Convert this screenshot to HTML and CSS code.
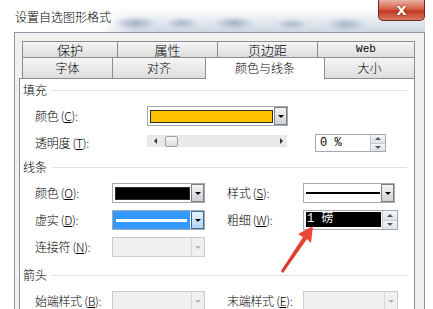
FILE: index.html
```html
<!DOCTYPE html>
<html lang="zh-CN">
<head>
  <meta charset="UTF-8" />
  <meta name="viewport" content="width=device-width, initial-scale=1.0" />
  <title>设置自选图形格式</title>
  <link rel="stylesheet" href="styles.css">
</head>
<body>
  <div class="window">
    <div class="titlebar">
      <span class="title">设置自选图形格式</span>
      <span class="close">X</span>
    </div>

    <div class="dialog">
      <div class="tabs tabs-back">
        <div class="tab t-96">保护</div>
        <div class="tab t-100">属性</div>
        <div class="tab t-100">页边距</div>
        <div class="tab t-97 tab-web">Web</div>
      </div>
      <div class="tabs tabs-front">
        <div class="tab t-91">字体</div>
        <div class="tab t-93">对齐</div>
        <div class="tab t-119 active">颜色与线条</div>
        <div class="tab t-90">大小</div>
      </div>

      <div class="panel">
        <div class="group">
          <div class="group-head"><span>填充</span></div>
          <div class="rows">
            <div class="row">
              <span class="lbl lbl-wide">颜色 (<u>C</u>):</span>
              <div class="combo combo-fill">
                <span class="swatch swatch-yellow"></span>
                <span class="drop"></span>
              </div>
            </div>
            <div class="row">
              <span class="lbl lbl-wide">透明度 (<u>T</u>):</span>
              <div class="slider">
                <span class="arrow-left"></span>
                <span class="thumb"></span>
                <span class="arrow-right"></span>
              </div>
              <div class="spin spin-pct">
                <span class="spin-text">0 %</span>
                <span class="spin-btns"><span class="up"></span><span class="down"></span></span>
              </div>
            </div>
          </div>
        </div>

        <div class="group group-line">
          <div class="group-head"><span>线条</span></div>
          <div class="rows">
            <div class="row">
              <span class="lbl lbl-md">颜色 (<u>O</u>):</span>
              <div class="combo combo-md">
                <span class="swatch swatch-black"></span>
                <span class="drop"></span>
              </div>
              <span class="lbl lbl-right">样式 (<u>S</u>):</span>
              <div class="combo combo-rt">
                <span class="line-sample"></span>
                <span class="drop"></span>
              </div>
            </div>
            <div class="row">
              <span class="lbl lbl-md">虚实 (<u>D</u>):</span>
              <div class="combo combo-md">
                <span class="dash-sel"></span>
                <span class="drop drop-hot"></span>
              </div>
              <span class="lbl lbl-right">粗细 (<u>W</u>):</span>
              <div class="spin spin-weight">
                <span class="spin-text sel-text">1 磅</span>
                <span class="spin-btns"><span class="up"></span><span class="down"></span></span>
              </div>
            </div>
            <div class="row">
              <span class="lbl lbl-md">连接符 (<u>N</u>):</span>
              <div class="combo combo-md disabled">
                <span class="blank"></span>
                <span class="drop"></span>
              </div>
            </div>
          </div>
        </div>

        <div class="group group-arrow">
          <div class="group-head"><span>箭头</span></div>
          <div class="rows">
            <div class="row">
              <span class="lbl lbl-md">始端样式 (<u>B</u>):</span>
              <div class="combo combo-md disabled">
                <span class="blank"></span>
                <span class="drop"></span>
              </div>
              <span class="lbl lbl-right">末端样式 (<u>E</u>):</span>
              <div class="combo combo-end disabled">
                <span class="blank"></span>
                <span class="drop"></span>
              </div>
            </div>
          </div>
        </div>
      </div>
    </div>
  </div>

  <!-- red annotation arrow pointing at the weight box -->
  <svg class="annot" width="433" height="309" viewBox="0 0 433 309">
    <defs>
      <linearGradient id="red" x1="0" y1="1" x2="1" y2="0">
        <stop offset="0" stop-color="#d8322a"/>
        <stop offset="1" stop-color="#f04a3c"/>
      </linearGradient>
    </defs>
    <polygon points="313,226 298,234 303,237 281,271 283,273 307,239 311,243" fill="url(#red)"/>
  </svg>
</body>
</html>
```

FILE: styles.css
```css
body {
  margin: 0;
  width: 433px;
  height: 309px;
  overflow: hidden;
  background: #fff;
  position: relative;
  font-family: "Noto Sans CJK SC", "Liberation Sans", sans-serif;
  font-weight: 300;
  font-size: 12px;
  color: #000;
}
.window {
  margin-left: 14px;
  width: 411px;
}
.titlebar {
  height: 32px;
  display: flex;
  justify-content: space-between;
  align-items: flex-start;
  background:
    radial-gradient(22px 7px at 121px 23px, rgba(90,115,145,.45), transparent),
    radial-gradient(16px 6px at 168px 23px, rgba(90,115,145,.4), transparent),
    radial-gradient(20px 7px at 220px 23px, rgba(90,115,145,.45), transparent),
    radial-gradient(16px 6px at 278px 24px, rgba(90,115,145,.35), transparent),
    radial-gradient(20px 7px at 332px 24px, rgba(90,115,145,.4), transparent),
    linear-gradient(to right, #fff 0, #fff 85px, rgba(255,255,255,0) 120px),
    linear-gradient(to bottom, rgba(255,255,255,0) 25%, rgba(196,208,222,.85) 100%),
    #fff;
}
.title {
  margin: 9px 0 0 1px;
  line-height: 16px;
  font-size: 12px;
}
.close {
  width: 47px;
  height: 21px;
  box-sizing: border-box;
  border: 1px solid #6e2b22;
  border-top: none;
  border-radius: 0 0 5px 5px;
  background: linear-gradient(#eab2a6 0%, #d9604a 45%, #c2381f 55%, #d67a62 100%);
  color: #fff;
  font-family: "DejaVu Sans", sans-serif;
  font-weight: bold;
  font-size: 13px;
  line-height: 21px;
  text-align: center;
  text-shadow: 0 0 2px #5a1a10;
}
.dialog {
  border: 1px solid #8a97a7;
  border-bottom: none;
  background: #f0f0f0;
  height: 277px;
  overflow: hidden;
  padding: 8px 9px 0 4px;
  box-sizing: border-box;
}
.tabs {
  display: flex;
  margin-left: 3px;
}
.tab {
  box-sizing: border-box;
  border: 1px solid #8b8d92;
  border-left: none;
  background: linear-gradient(#f5f5f5, #dedede);
  text-align: center;
  flex: none;
}
.tab:first-child {
  border-left: 1px solid #8b8d92;
}
.tabs-back .tab {
  height: 17px;
  line-height: 15px;
  font-size: 13px;
}
.tab-web {
  font-family: "Liberation Mono", monospace;
  font-weight: normal;
  font-size: 11px !important;
}
.tabs-front {
  height: 21px;
  margin-bottom: -1px;
  align-items: flex-end;
}
.tabs-front .tab {
  height: 21px;
  border-top: none;
  line-height: 19px;
  font-size: 12px;
}
.tabs-front .tab.active {
  height: 22px;
  border-top: 1px solid #8b8d92;
  border-bottom: none;
  background: #fff;
  position: relative;
  z-index: 1;
}
.t-96 { width: 96px; }
.t-100 { width: 100px; }
.t-97 { width: 97px; }
.t-91 { width: 91px; }
.t-93 { width: 93px; }
.t-119 { width: 119px; }
.t-90 { width: 90px; }

.panel {
  border: 1px solid #8b8d92;
  border-bottom: none;
  background: #fff;
  height: 240px;
  padding: 3px 7px 0 3px;
}
.group-line { margin-top: 6px; }
.group-arrow { margin-top: 10px; }
.group-head {
  display: flex;
  align-items: center;
  gap: 5px;
  height: 16px;
  line-height: 16px;
  margin-bottom: 8px;
}
.group-head::after {
  content: "";
  flex: 1;
  height: 1px;
  background: #dcdfe3;
}
.rows {
  display: flex;
  flex-direction: column;
  gap: 7px;
  padding-left: 12px;
}
.row {
  display: flex;
  align-items: center;
  height: 20px;
}
.lbl {
  flex: none;
  line-height: 20px;
  white-space: nowrap;
  letter-spacing: -0.3px;
}
.lbl-wide { width: 112px; }
.lbl-md { width: 77px; }
.lbl-right { width: 76px; margin-left: 22px; }

.combo {
  display: flex;
  box-sizing: border-box;
  height: 20px;
  border: 1px solid #a5a9b0;
  background: #fff;
  flex: none;
}
.combo-fill { width: 141px; }
.combo-md { width: 93px; }
.combo-rt { width: 92px; }
.combo-end { width: 95px; }
.swatch {
  flex: 1;
  margin: 3px 1px 2px 2px;
  border: 1px solid #2a2a2a;
}
.swatch-yellow { background: #ffc000; }
.swatch-black { background: #000; }
.drop {
  width: 13px;
  flex: none;
  box-sizing: border-box;
  border: 1px solid #7b7f86;
  background: linear-gradient(#f4f4f4, #cfd1d4);
  display: flex;
  align-items: center;
  justify-content: center;
}
.drop::after {
  content: "";
  border-left: 3px solid transparent;
  border-right: 3px solid transparent;
  border-top: 3px solid #000;
}
.drop-hot {
  border-color: #3b6f9c;
  background: linear-gradient(#e6f2fc, #aed4f2);
}
.dash-sel {
  flex: 1;
  margin: 0 1px 0 0;
  background: #3399ff;
  display: flex;
  align-items: center;
}
.dash-sel::after {
  content: "";
  flex: 1;
  height: 3px;
  margin: 0 3px;
  background: #fff;
}
.line-sample {
  flex: 1;
  display: flex;
  align-items: center;
  margin: 0 1px 0 2px;
}
.line-sample::after {
  content: "";
  flex: 1;
  height: 2px;
  background: #000;
}
.combo.disabled {
  border-color: #c9cbcf;
  background: #f0f0f0;
}
.blank { flex: 1; }
.combo.disabled .drop {
  border: none;
  border-left: 1px solid #d8d8d8;
  background: #f0f0f0;
}
.combo.disabled .drop::after {
  border-top-color: #b5b5b5;
}

.slider {
  align-self: flex-start;
  margin-top: 2px;
  width: 140px;
  height: 12px;
  flex: none;
  background: #e9e9e9;
  display: flex;
  align-items: center;
}
.arrow-left {
  margin-left: 7px;
  border-top: 3px solid transparent;
  border-bottom: 3px solid transparent;
  border-right: 3px solid #333;
}
.thumb {
  margin-left: 8px;
  width: 13px;
  height: 11px;
  box-sizing: border-box;
  border: 1px solid #9aa0a8;
  border-radius: 2px;
  background: linear-gradient(#f8f8f8, #d9dbde);
}
.arrow-right {
  margin-left: auto;
  margin-right: 4px;
  border-top: 3px solid transparent;
  border-bottom: 3px solid transparent;
  border-left: 3px solid #333;
}

.spin {
  display: flex;
  box-sizing: border-box;
  border: 1px solid #a5a9b0;
  background: #fff;
  flex: none;
}
.spin-pct {
  width: 71px;
  height: 18px;
  margin-left: 28px;
}
.spin-weight {
  width: 95px;
  height: 20px;
}
.spin-text {
  flex: 1;
  padding-left: 4px;
  font-family: "Liberation Mono", "Noto Sans CJK SC", monospace;
  font-weight: normal;
  font-size: 12px;
  line-height: 16px;
}
.sel-text {
  margin: 1px 1px 2px 2px;
  padding-left: 1px;
  background: #000;
  color: #fff;
  line-height: 15px;
}
.spin-btns {
  width: 14px;
  flex: none;
  display: flex;
  flex-direction: column;
  border-left: 1px solid #c4cad2;
}
.spin-btns span {
  flex: 1;
  display: flex;
  align-items: center;
  justify-content: center;
  background: linear-gradient(#f4f7fa, #dbe2ea);
}
.spin-btns span + span {
  border-top: 1px solid #c4cad2;
}
.spin-btns .up::after {
  content: "";
  border-left: 3px solid transparent;
  border-right: 3px solid transparent;
  border-bottom: 3px solid #555;
}
.spin-btns .down::after {
  content: "";
  border-left: 3px solid transparent;
  border-right: 3px solid transparent;
  border-top: 3px solid #555;
}

.annot {
  position: absolute;
  left: 0;
  top: 0;
  pointer-events: none;
}
```
